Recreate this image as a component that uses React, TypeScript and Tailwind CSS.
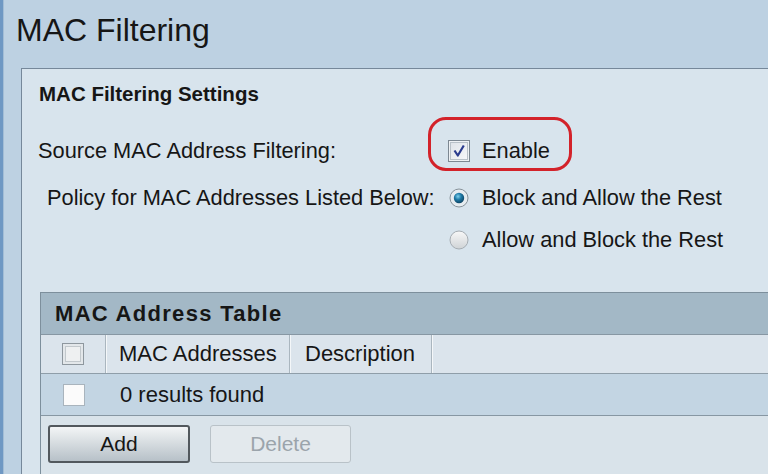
import React from "react";

function CheckedBox() {
  return (
    <svg width="22" height="22" viewBox="0 0 22 22" className="block">
      <defs>
        <linearGradient id="cbg" x1="0" y1="0" x2="1" y2="1">
          <stop offset="0" stopColor="#dfe3e8" />
          <stop offset="1" stopColor="#f7f8fa" />
        </linearGradient>
      </defs>
      <rect x="0.5" y="0.5" width="21" height="21" fill="#eef1f4" stroke="#7d8892" />
      <rect x="2.5" y="2.5" width="17" height="17" fill="url(#cbg)" stroke="#b9c1c8" />
      <path d="M6.5 10.5 L9.8 15.5 L15.8 5.5" stroke="#2b3c8e" strokeWidth="2.2" fill="none" strokeLinejoin="round" />
    </svg>
  );
}

function DisabledBox() {
  return (
    <svg width="22" height="22" viewBox="0 0 22 22" className="block">
      <rect x="0.5" y="0.5" width="21" height="21" fill="#e3e7ea" stroke="#8e979e" />
      <rect x="3.5" y="3.5" width="15" height="15" fill="#eef0f1" stroke="#c2c8cc" />
    </svg>
  );
}

function WhiteBox() {
  return (
    <svg width="22" height="22" viewBox="0 0 22 22" className="block">
      <rect x="0.5" y="0.5" width="21" height="21" fill="#fbfbfb" stroke="#a9b4bd" />
    </svg>
  );
}

function Radio({ checked }: { checked: boolean }) {
  return (
    <svg width="22" height="22" viewBox="0 0 22 22" className="block">
      <defs>
        <linearGradient id="rOff" x1="0" y1="0" x2="0" y2="1">
          <stop offset="0" stopColor="#f8f8f8" />
          <stop offset="1" stopColor="#cfd3d6" />
        </linearGradient>
        <radialGradient id="rDot" cx="0.4" cy="0.35" r="0.7">
          <stop offset="0" stopColor="#7fd0ec" />
          <stop offset="0.45" stopColor="#1f7aa6" />
          <stop offset="1" stopColor="#0c3f5e" />
        </radialGradient>
      </defs>
      {checked ? (
        <>
          <circle cx="11" cy="11" r="9" fill="#e6ecf0" stroke="#87929a" />
          <circle cx="11" cy="11" r="5.2" fill="url(#rDot)" />
        </>
      ) : (
        <circle cx="11" cy="11" r="9" fill="url(#rOff)" stroke="#a6adb3" />
      )}
    </svg>
  );
}

export default function App() {
  return (
    <div className="w-[768px] h-[474px] overflow-hidden flex bg-[#bdd1e2] font-['Liberation_Sans',Arial,sans-serif] text-[#161616]">
      <div className="w-[3px] shrink-0 bg-[#6f98c3]" />
      <div className="w-[1px] shrink-0 bg-[#a3bdd5]" />
      <div className="flex-1 min-w-0 flex flex-col pl-[12px]">
        <div className="h-[68px] shrink-0 pt-[14px] text-[32px] leading-[32px]">MAC Filtering</div>
        <div className="ml-[5px] w-[820px] flex-1 flex flex-col border-l border-t border-[#76889a] bg-[#d8e4ed] pl-[16px] pt-[13px]">
          <div className="ml-[1px] h-[24px] text-[20.5px] leading-[24px] font-bold">MAC Filtering Settings</div>

          <div className="mt-[33px] h-[24px] flex items-center text-[21.8px] leading-[24px]">
            <div className="w-[410px]">Source MAC Address Filtering:</div>
            <div className="relative flex items-center">
              <div className="absolute left-[-20px] top-[-22px] w-[144px] h-[54px] rounded-[18px] border-[3px] border-[#d3222a]" />
              <CheckedBox />
              <span className="ml-[12px]">Enable</span>
            </div>
          </div>

          <div className="mt-[23px] h-[24px] flex items-center text-[21.8px] leading-[24px]">
            <div className="w-[410px] pl-[9px]">Policy for MAC Addresses Listed Below:</div>
            <div className="flex items-center">
              <Radio checked />
              <span className="ml-[12px]">Block and Allow the Rest</span>
            </div>
          </div>

          <div className="mt-[18px] h-[24px] flex items-center text-[21.8px] leading-[24px]">
            <div className="w-[410px]" />
            <div className="flex items-center">
              <Radio checked={false} />
              <span className="ml-[12px]">Allow and Block the Rest</span>
            </div>
          </div>

          <div className="mt-[40px] ml-[2px] flex-1 flex flex-col border-l border-t border-[#7d8f9c] text-[22px] leading-[24px]">
            <div className="h-[42px] shrink-0 flex items-center pl-[14px] bg-[#a3b8c6] border-b border-[#8797a3] font-bold tracking-[1.3px]">
              MAC Address Table
            </div>
            <div className="h-[39px] shrink-0 flex bg-[#dbe4ec] border-b border-[#8f9ea9]">
              <div className="w-[65px] flex items-center justify-center border-r border-[#aab6bf]">
                <DisabledBox />
              </div>
              <div className="w-[184px] flex items-center pl-[13px] border-r border-[#aab6bf] shadow-[inset_1px_0_0_#f4f7f9]">
                MAC Addresses
              </div>
              <div className="w-[142px] flex items-center pl-[15px] border-r border-[#aab6bf] shadow-[inset_1px_0_0_#f4f7f9]">
                Description
              </div>
              <div className="flex-1 shadow-[inset_1px_0_0_#f4f7f9]" />
            </div>
            <div className="h-[42px] shrink-0 flex bg-[#c3d5e3] border-b border-[#8797a3]">
              <div className="w-[65px] flex items-center justify-center">
                <WhiteBox />
              </div>
              <div className="flex items-center pl-[14px]">0 results found</div>
            </div>
            <div className="flex-1 flex items-start gap-[20px] pt-[9px] pl-[7px] bg-[#d9e3ea]">
              <div className="w-[142px] h-[38px] flex items-center justify-center rounded-[3px] border-[2px] border-[#52585d] bg-linear-to-b from-[#f3f5f6] to-[#b7c1c8] text-[21px]">
                Add
              </div>
              <div className="w-[141px] h-[38px] flex items-center justify-center rounded-[3px] border border-[#b9c2c8] bg-[#e3e9ed] text-[#9ba4ab] text-[21px]">
                Delete
              </div>
            </div>
          </div>
        </div>
      </div>
    </div>
  );
}
